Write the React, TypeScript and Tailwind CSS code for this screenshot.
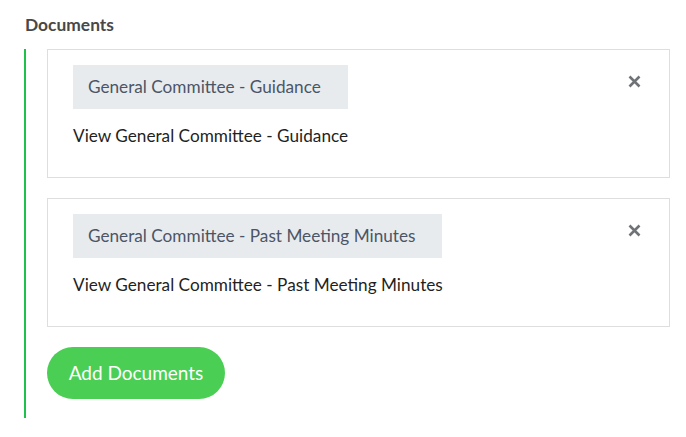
import React from "react";

const docs = ["General Committee - Guidance", "General Committee - Past Meeting Minutes"];

function XIcon() {
  return (
    <svg width="13" height="13" viewBox="0 0 13 13" className="block">
      <path d="M1.5 1.5 L11.5 11.5 M11.5 1.5 L1.5 11.5" stroke="#6f7378" strokeWidth="2.6" strokeLinecap="butt" />
    </svg>
  );
}

export default function App() {
  return (
    <div className="w-[686px] h-[437px] bg-white pl-[24px] pr-[16px] pt-[14px]" style={{ fontFamily: "Lato, 'Noto Sans', sans-serif" }}>
      <div className="pl-[1px] text-[17.4px] leading-[22px] font-bold text-[#484848]">Documents</div>
      <div className="mt-[13px] border-l-[2px] border-[#1ec24a] pl-[21px] pb-[19px] flex flex-col gap-[20px]">
        {docs.map((d) => (
          <div key={d} className="border border-[#dedede] pl-[25px] pr-[28px] pt-[15px] pb-[31px] flex justify-between items-start">
            <div className="flex flex-col items-start">
              <div className="h-[44px] pl-[15px] pr-[27px] flex items-center bg-[#e8ebee] text-[17.2px] text-[#4c5566]">{d}</div>
              <div className="mt-[16px] text-[17.2px] leading-[21px] text-[#1f1f24]">View {d}</div>
            </div>
            <div className="mt-[10px]">
              <XIcon />
            </div>
          </div>
        ))}
        <button className="self-start h-[52px] w-[178px] rounded-full bg-[#4ace53] text-white text-[19px] flex items-center justify-center">Add Documents</button>
      </div>
    </div>
  );
}
